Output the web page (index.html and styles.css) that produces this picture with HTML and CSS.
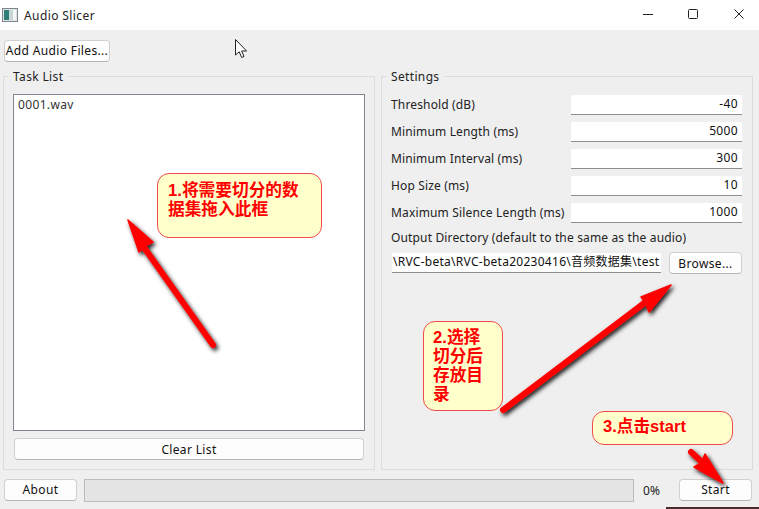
FILE: index.html
```html
<!DOCTYPE html>
<html lang="zh-CN">
<head>
<meta charset="utf-8">
<title>Audio Slicer</title>
<link rel="stylesheet" href="styles.css">
</head>
<body>
<div class="window">
  <header class="titlebar">
    <svg class="app-icon" width="16" height="14" viewBox="0 0 16 14">
      <rect x="0.5" y="0.5" width="15" height="13" fill="#dfe3e6" stroke="#7d8790"/>
      <rect x="2" y="2" width="5" height="10" fill="#2f7f78"/>
      <rect x="7" y="2" width="4" height="10" fill="#c5d6d3"/>
      <rect x="11" y="2" width="3" height="10" fill="#f4f6f7"/>
    </svg>
    <span class="title">Audio Slicer</span>
    <div class="controls">
      <svg width="46" height="30" viewBox="0 0 46 30"><path d="M22 14.500h10" stroke="#222" stroke-width="1" fill="none"/></svg>
      <svg width="46" height="30" viewBox="0 0 46 30"><rect x="21.500" y="9.500" width="9" height="9" rx="1" stroke="#222" fill="none"/></svg>
      <svg width="46" height="30" viewBox="0 0 46 30"><path d="M21.500 9.500l9 9M30.500 9.500l-9 9" stroke="#222" fill="none"/></svg>
    </div>
  </header>

  <div class="content">
    <div class="toprow"><button class="btn add">Add Audio Files...</button></div>
    <div class="panels">
      <section class="group tasks">
        <h2 class="legend">Task List</h2>
        <div class="list"><div class="list-item">0001.wav</div></div>
        <button class="btn clear">Clear List</button>
      </section>
      <section class="group settings">
        <h2 class="legend">Settings</h2>
        <div class="form">
          <label class="lbl">Threshold (dB)</label><div class="field num">-40</div>
          <label class="lbl">Minimum Length (ms)</label><div class="field num">5000</div>
          <label class="lbl">Minimum Interval (ms)</label><div class="field num">300</div>
          <label class="lbl">Hop Size (ms)</label><div class="field num">10</div>
          <label class="lbl">Maximum Silence Length (ms)</label><div class="field num">1000</div>
        </div>
        <div class="out-label">Output Directory (default to the same as the audio)</div>
        <div class="out-row">
          <div class="field path">\RVC-beta\RVC-beta20230416\音频数据集\test</div>
          <button class="btn browse">Browse...</button>
        </div>
      </section>
    </div>
    <footer class="bottom">
      <button class="btn about">About</button>
      <div class="progress"></div>
      <span class="pct">0%</span>
      <button class="btn start">Start</button>
    </footer>
  </div>

  <div class="note note1">1.将需要切分的数<br>据集拖入此框</div>
  <div class="note note2">2.选择<br>切分后<br>存放目<br>录</div>
  <div class="note note3">3.点击start</div>
  <div class="stripe"></div>

  <svg class="overlay" width="759" height="509" viewBox="0 0 759 509">
    <defs>
      <filter id="sh" x="-30%" y="-30%" width="170%" height="170%">
        <feDropShadow dx="2" dy="2.500" stdDeviation="2" flood-color="#000" flood-opacity="0.9"/>
      </filter>
    </defs>
    <g fill="#ff0000" stroke="#ff0000" stroke-linejoin="round" stroke-linecap="round" filter="url(#sh)">
      <g>
        <path d="M143 246L213 345" stroke-width="6" fill="none"/>
        <path d="M128 220L153 242 145 246 139 252Z" stroke-width="1.500"/>
      </g>
      <g>
        <path d="M503 410L647 301" stroke-width="6" fill="none"/>
        <path d="M671 285L649 312 645 302 641 297Z" stroke-width="1.500"/>
      </g>
      <g>
        <path d="M691 452L703 463" stroke-width="6" fill="none"/>
        <path d="M723 483L694 467 701 463 705 454Z" stroke-width="1.500"/>
      </g>
    </g>
    <path d="M235.500 39.500v15.500l3.700-3.200 2.500 5.700 2.300-1-2.400-5.500h5z" fill="#fff" stroke="#222" stroke-width="1"/>
  </svg>
</div>
</body>
</html>
```

FILE: styles.css
```css
* { box-sizing: border-box; }
html, body { margin: 0; padding: 0; }
body {
  width: 759px;
  height: 509px;
  overflow: hidden;
  font-family: "Noto Sans", "Noto Sans CJK SC", sans-serif;
  font-size: 12px;
  letter-spacing: 0.15px;
  color: #111;
  background: #efefef;
}
.window { position: relative; width: 759px; height: 509px; display: flex; flex-direction: column; }

.titlebar { height: 30px; flex: none; background: #fff; display: flex; align-items: center; padding-left: 2px; }
.app-icon { margin-right: 6px; }
.title { flex: 1; color: #222; letter-spacing: 0.4px; }
.controls { display: flex; }
.controls svg { display: block; }

.content { flex: 1; display: flex; flex-direction: column; padding: 10px 6px 9px 3px; }
.toprow { height: 22px; flex: none; padding-left: 1px; }

.btn {
  font: inherit;
  letter-spacing: 0.35px;
  color: #111;
  background: #fdfdfd;
  border: 1px solid #d0d0d0;
  border-bottom-color: #b5b5b5;
  border-radius: 4px;
  padding: 1px 0 0;
  height: 22px;
  line-height: 20px;
  display: block;
}
.add { width: 106px; padding-top: 0; }

.panels { display: flex; gap: 6px; margin-top: 14px; height: 394px; flex: none; }
.group { position: relative; width: 372px; height: 394px; border: 1px solid #dcdcdc; }
.legend {
  position: absolute;
  top: -8px;
  left: 4px;
  margin: 0;
  padding: 0 5px;
  background: #efefef;
  font: inherit;
  letter-spacing: 0.35px;
  line-height: 16px;
  color: #222;
}
.tasks { padding: 17px 9px 0; display: flex; flex-direction: column; }
.list { height: 337px; background: #fff; border: 1px solid #858591; padding: 1px 4px; }
.list-item { line-height: 17px; color: #333; letter-spacing: 0.35px; }
.clear { width: 350px; margin: 7px 0 0 1px; }

.settings { padding: 18px 9px 0 9px; }
.form { display: grid; grid-template-columns: 180px 171px; row-gap: 7px; align-items: center; }
.lbl { line-height: 20px; color: #222; white-space: nowrap; }
.field { height: 20px; background: #fff; border-bottom: 1px solid #8e8e8e; line-height: 18px; border-radius: 2px 2px 0 0; }
.num { text-align: right; padding-right: 4px; letter-spacing: 0.35px; }
.out-label { margin-top: 5px; line-height: 20px; color: #222; white-space: nowrap; }
.out-row { display: flex; align-items: center; gap: 8px; margin-top: 4px; padding-left: 1px; }
.path { width: 269px; flex: none; overflow: hidden; white-space: nowrap; padding-left: 1px; letter-spacing: 0.27px; }
.browse { width: 73px; flex: none; }

.bottom { display: flex; align-items: center; margin-top: 8px; height: 24px; flex: none; padding-left: 1px; }
.about { width: 73px; padding-top: 0; }
.progress { width: 550px; height: 23px; margin-left: 7px; background: #e5e5e5; border: 1px solid #bcbcbc; }
.pct { width: 45px; padding-left: 9px; color: #222; }
.start { width: 73px; padding-top: 0; }

.note {
  position: absolute;
  background: #ffffcc;
  border: 1px solid #f04a4a;
  color: #ff0000;
  font-family: "Liberation Sans", "Noto Sans CJK SC", sans-serif;
  font-weight: 700;
  font-size: 16.7px;
  letter-spacing: 0;
  line-height: 19px;
  border-radius: 12px;
  white-space: nowrap;
}
.note1 { left: 157px; top: 173px; width: 165px; height: 65px; padding: 7px 0 0 10px; }
.note2 { left: 423px; top: 321px; width: 80px; height: 90px; padding: 6px 0 0 9px; }
.note3 { left: 592px; top: 411px; width: 141px; height: 34px; padding: 5px 0 0 10px; font-size: 16.6px; }
.stripe { position: absolute; left: 666px; top: 507px; width: 93px; height: 2px; background: #4a2a2a; }
.overlay { position: absolute; left: 0; top: 0; pointer-events: none; }
```
